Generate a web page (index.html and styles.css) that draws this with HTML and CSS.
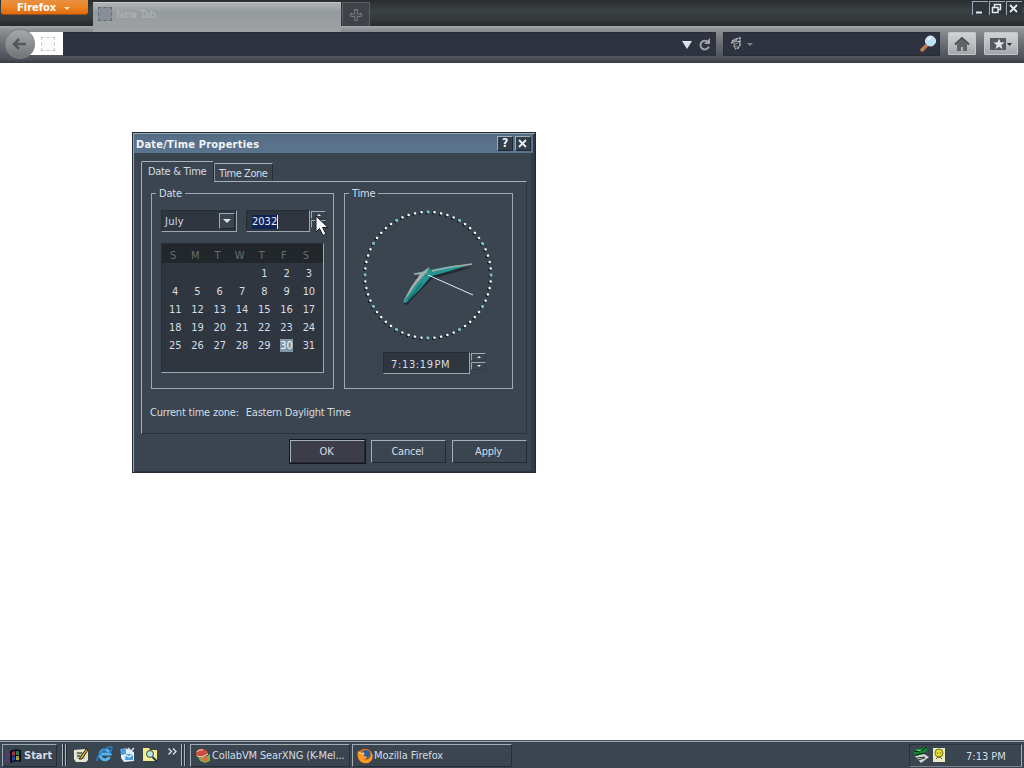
FILE: index.html
```html
<!DOCTYPE html>
<html lang="en">
<head>
<meta charset="utf-8">
<title>Desktop</title>
<link rel="stylesheet" href="styles.css">
</head>
<body>
<div class="desktop">
  <header class="tabstrip">
    <div class="fxbtn"><span>Firefox</span><i class="tri"></i></div>
    <div class="tab"><i class="ph"></i><span>New Tab</span></div>
    <div class="newtab"><svg width="14" height="14" viewBox="0 0 14 14"><path d="M5.500 1.500h3v4h4v3h-4v4h-3v-4h-4v-3h4z" fill="#4b4e58" stroke="#858992" stroke-dasharray="2 1"/></svg></div>
    <div class="winbtns">
      <b><svg width="13" height="13"><path d="M3 10.500h6" stroke="#e4eaf0" stroke-width="2"/></svg></b>
      <b><svg width="13" height="13"><path d="M4.500 5V2.500h6v5H8M2 5.500h6v5H2.500V5" fill="none" stroke="#e4eaf0" stroke-width="1.500"/></svg></b>
      <b><svg width="13" height="13"><path d="M3 3l7 7M10 3l-7 7" stroke="#e4eaf0" stroke-width="1.800"/></svg></b>
    </div>
  </header>
  <nav class="navbar">
    <div class="back"><svg width="18" height="16" viewBox="0 0 18 16"><path d="M8 3L3 8l5 5M3 8h12" fill="none" stroke="#54585b" stroke-width="2.500"/></svg></div>
    <div class="ident"><i class="ph light"></i></div>
    <div class="url">
      <svg width="32" height="16" viewBox="0 0 32 16"><path d="M1 4h10l-5 8z" fill="#e0e4ec"/><path d="M27 5.200a4.300 4.300 0 1 0 .8 4.500" fill="none" stroke="#a0a4ac" stroke-width="2"/><path d="M29 1v6h-6z" fill="#a0a4ac"/></svg>
    </div>
    <div class="search">
      <svg width="26" height="16" viewBox="0 0 26 16"><path d="M3 5l4-2 4-1v3l-2 2M2 7l5-2 4 1v3l-2 3-3 1" fill="none" stroke="#b4b8bc" stroke-width="1.500" stroke-dasharray="3 .6"/><path d="M4 9l5-2M4 11l4-1M5 6l1 6" fill="none" stroke="#8d9298"/><path d="M18 7h6l-3 3z" fill="#80848c"/></svg>
      <svg width="20" height="20" viewBox="0 0 20 20"><path d="M3 17l6-6" stroke="#b9825b" stroke-width="3.500"/><circle cx="12.500" cy="7" r="5" fill="#b5e3f7" stroke="#e3f4fc"/><path d="M10 6q1-2 3-2" stroke="#fff" fill="none" stroke-width="1.500"/></svg>
    </div>
    <div class="tool home"><svg width="18" height="16" viewBox="0 0 18 16"><path d="M2 8.500L9 2l7 6.500" fill="none" stroke="#44484b" stroke-width="2"/><path d="M4 8l5-4.500L14 8v7h-4v-4H8v4H4z" fill="#606468"/></svg></div>
    <div class="tool book"><svg width="24" height="16" viewBox="0 0 24 16"><path d="M1 2h16v12H1z" fill="#555a62"/><path d="M10 2.500l1.500 3.800 4 .2-3.100 2.500 1 4L10 10.800 6.600 13l1-4-3.100-2.500 4-.2z" fill="#dfe2e5"/><path d="M18 7h5l-2.500 3z" fill="#303439"/></svg></div>
  </nav>
  <main class="page"></main>
  <footer class="taskbar">
    <div class="start"><svg width="17" height="16" viewBox="0 0 17 16"><path d="M5 3q5-3 11-1v12q-5-2-11 1z" fill="#080b18"/><path d="M7 4l3-1v4l-3 1z" fill="#a73540"/><path d="M11 3l3 .3v4l-3-.3z" fill="#298044"/><path d="M7 9l3-1v4l-3 1z" fill="#2947ae"/><path d="M11 8l3 .3v4l-3-.3z" fill="#b2a636"/><path d="M1 4h3M0 7h5M1 10h4M0 13h5" stroke="#713a91" stroke-width="1.500" stroke-dasharray="2 1"/></svg><span>Start</span></div>
    <i class="grip"></i><i class="grip g2"></i>
    <div class="quick">
      <svg width="17" height="17" viewBox="0 0 17 17"><path d="M1 4l11-1 3 2v9l-2 2H3l-2-3z" fill="#e8e7d2"/><path d="M3 6h9v7H4z" fill="#bad0b4"/><path d="M4 7h5M4 10h3M6 13l7-10 2 1-6 9z" stroke="#28241c" fill="#e0ad32"/></svg>
      <svg width="17" height="17" viewBox="0 0 17 17"><path d="M13.500 11a5 5 0 1 1 .5-3H5" fill="none" stroke="#55b6f0" stroke-width="3"/><path d="M1 15Q1 9 8 4t8-2q0 3-3 5" fill="none" stroke="#247bcc" stroke-width="1.600"/></svg>
      <svg width="17" height="17" viewBox="0 0 17 17"><path d="M2 5l4-3 9 4v9l-10 1-3-4z" fill="#e0effa"/><path d="M1 3l6-1v6l-5 1zM7 8h7v6H6z" fill="#4c9ee0"/><path d="M7 9l3 2 4-3M9 2l3 3 3-3" fill="none" stroke="#e6f3fc" stroke-width="1.300"/></svg>
      <svg width="17" height="17" viewBox="0 0 17 17"><path d="M1 2h6l1 2h7v11H1z" fill="#f1ec83"/><path d="M3 7h10v6H3z" fill="#fff9b1"/><circle cx="8" cy="8" r="3.500" fill="#b4e6eb" stroke="#31452d"/><path d="M10.500 11l5 5" stroke="#263554" stroke-width="2"/></svg>
      <svg class="chev" width="9" height="8" viewBox="0 0 9 8"><path d="M.5.500l3 3-3 3M5 .5l3 3-3 3" fill="none" stroke="#dfe5ec" stroke-width="1.300"/></svg>
    </div>
    <i class="grip"></i><i class="grip g2"></i>
    <div class="task t1"><svg width="16" height="16" viewBox="0 0 16 16"><path d="M1 5q2-5 7-4 5 1 5 5l-5 3-7-1z" fill="#c84e45"/><path d="M2 4q2-3 6-2" stroke="#f1a58d" fill="none" stroke-width="1.500"/><path d="M3 9l6 1 6-4v7l-5 2-5-2z" fill="#7fae42"/><path d="M6 9l5-1 2 4-4 2z" fill="#e46d46"/><path d="M2 8l5 1 6-3" fill="none" stroke="#f4e3b1"/></svg><span>CollabVM SearXNG (K-Mel...</span></div>
    <div class="task t2"><svg width="16" height="16" viewBox="0 0 16 16"><circle cx="8" cy="8" r="7.300" fill="#e46b16"/><circle cx="9" cy="6.500" r="4.500" fill="#315f9b"/><path d="M1 3l3 2 3-1-1 3 4 2q-1 3-4 2 3 3 7-1 2-3 0-7 5 5 1 10-4 4-9 1-6-4-4-11z" fill="#f69b2a"/><path d="M2 4l3 2 2-1-1 2" stroke="#ffdb77" fill="none"/></svg><span>Mozilla Firefox</span></div>
    <div class="tray">
      <svg width="18" height="18" viewBox="0 0 18 18"><path d="M3 10l9-2 5 3-8 6z" fill="#d3dad5"/><path d="M5 12l8-1M6 14l7-2" stroke="#253028"/><path d="M2 4l10-2 4-1-2 5-9 4-3-2z" fill="#138a37"/><path d="M2 5l6 1 7-5M3 9l10-2" stroke="#082b16" fill="none"/><path d="M5 4l4 1" stroke="#7fe48f"/></svg>
      <svg width="14" height="16" viewBox="0 0 14 16"><path d="M1 1h12v14H1z" fill="#e9e9c4"/><circle cx="7" cy="6" r="4" fill="#e5dc29" stroke="#767217"/><path d="M4 12q3-4 6 0M5 6h1M8 6h1" stroke="#55551e" fill="none"/></svg>
      <span>7:13 PM</span>
    </div>
  </footer>

  <section class="dialog">
    <div class="title"><span>Date/Time Properties</span><b class="q">?</b><b><svg width="13" height="13"><path d="M3 3l7 7M10 3l-7 7" stroke="#e8eef4" stroke-width="1.800"/></svg></b></div>
    <div class="tabs"><div class="tb on"><span>Date &amp; Time</span></div><div class="tb off"><span>Time Zone</span></div></div>
    <div class="sheet">
      <div class="groups">
        <div class="group date">
          <div class="legend"><i></i><span>Date</span><i class="fill"></i></div>
          <div class="fields">
            <div class="combo"><span>July</span><b><i class="tri"></i></b></div>
            <div class="year"><span>2032</span></div>
            <div class="spin"><b><i class="up"></i></b><b><i class="dn"></i></b></div>
          </div>
          <div class="cal">
            <div class="row head"><span>S</span><span>M</span><span>T</span><span>W</span><span>T</span><span>F</span><span>S</span></div>
            <div class="row"><span></span><span></span><span></span><span></span><span>1</span><span>2</span><span>3</span></div>
            <div class="row"><span>4</span><span>5</span><span>6</span><span>7</span><span>8</span><span>9</span><span>10</span></div>
            <div class="row"><span>11</span><span>12</span><span>13</span><span>14</span><span>15</span><span>16</span><span>17</span></div>
            <div class="row"><span>18</span><span>19</span><span>20</span><span>21</span><span>22</span><span>23</span><span>24</span></div>
            <div class="row"><span>25</span><span>26</span><span>27</span><span>28</span><span>29</span><span><em>30</em></span><span>31</span></div>
          </div>
        </div>
        <div class="group time">
          <div class="legend"><i></i><span>Time</span><i class="fill"></i></div>
          <svg class="clock" width="136" height="136" viewBox="-68 -68 136 136">
            <circle class="shade" r="63" pathLength="60" cx="-1" cy="1"/>
            <circle class="dots" r="63" pathLength="60"/>
            <circle class="hours" r="63" pathLength="12"/>
            <path d="M-15 1L-4-4 1-8 1-3 22-8 44-10 20-3 3 2-8 13-22 28-25 27-18 13-7 1z" fill="#202b33" transform="translate(1 2)"/>
            <path d="M-14-1L0-5 22-9 44-11 22-4 0 2z" fill="#249591"/>
            <path d="M1-8L4 0-7 13-22 28-25 27-17 12-7-1z" fill="#249591"/>
            <path d="M1-8L-8-1-17 12-25 27-21 22-11 8-1-3z" fill="#a6aaa9"/>
            <path d="M-14-1L-1-3M4-4L23-8 44-11" fill="none" stroke="#a6aaa9" stroke-width="1.600"/>
            <path d="M-6 8L-20 25" stroke="#147570" stroke-width="1.500"/>
            <path d="M0 0L45 20" stroke="#e4e8ea"/>
          </svg>
          <div class="timerow"><div class="tf"><span>7:13:19 PM</span></div><div class="spin"><b><i class="up"></i></b><b><i class="dn"></i></b></div></div>
        </div>
      </div>
      <div class="zone"><span>Current time zone:</span><span>Eastern Daylight Time</span></div>
    </div>
    <div class="buttons"><div class="btn ok">OK</div><div class="btn">Cancel</div><div class="btn">Apply</div></div>
  </section>
  <svg class="cursor" width="14" height="22" viewBox="0 0 14 22"><path d="M1 1v16l3.500-3.500L8 20.500l3-1.500-3.500-6.500H13z" fill="#fff" stroke="#1a1f28"/></svg>
</div>
</body>
</html>
```
FILE: styles.css
```css
* { box-sizing: border-box; }
body { margin: 0; font: 11px/14px "DejaVu Sans Condensed", "DejaVu Sans", sans-serif; font-stretch: condensed; letter-spacing: -0.22px; color: #d4dde5; }
svg { display: block; flex: none; }
i, em { font-style: normal; }
span { white-space: nowrap; }
.desktop { position: relative; width: 1024px; height: 768px; display: flex; flex-direction: column; overflow: hidden; background: #fff; }
.tri { display: block; border: 4px solid transparent; border-top-color: #e0e4e8; border-bottom: 0; }

.tabstrip { height: 26px; display: flex; background: linear-gradient(#292d30, #3c4143 40%, #34393b 75%, #25292a); }
.fxbtn { width: 87px; height: 15px; margin-left: 1px; padding: 2px 18px 0 16px; display: flex; align-items: center; justify-content: space-between; background: linear-gradient(#e79143, #ed8425 50%, #df6a0c); border-bottom: 1px solid #9a4d14; border-radius: 0 0 3px 3px; color: #fff; font-weight: bold; letter-spacing: 0; }
.fxbtn .tri { border-width: 3px; border-bottom: 0; border-top-color: #ffe5c7; }
.tab { width: 248px; height: 30px; margin: 2px 0 0 5px; padding: 4px 5px 0; display: flex; gap: 4px; align-items: flex-start; background: linear-gradient(#b0b4b6, #969b9e 30%, #9da1a4); color: #b1b5b7; border-top: 1px solid #c5c8ca; line-height: 15px; z-index: 1; }
.ph { width: 14px; height: 14px; border: 1px dashed #656978; background: #898d96; }
.ph.light { border-color: #c6c6ca; background: #fafafa; }
.newtab { width: 28px; height: 24px; margin: 2px 0 0 1px; display: flex; align-items: center; justify-content: center; background: #3f4349; border: 1px solid #5b6065; border-bottom: 0; }
.winbtns { margin: 1px 2px 0 auto; display: flex; gap: 1px; height: 14px; }
.winbtns b { width: 16px; border-left: 1px solid #9eabb7; border-top: 1px solid #9eabb7; background: #2e363c; }

.navbar { height: 37px; display: flex; align-items: flex-start; padding: 6px 6px 0 5px; background: linear-gradient(#a4a8aa 0, #8d9195 10%, #686c72 50%, #4a4e57 90%, #363a42 100%); }
.back { width: 30px; height: 30px; margin-top: -3px; border-radius: 50%; background: linear-gradient(#a6a9aa, #868a8b 60%, #707475); border: 1px solid #7f8385; display: flex; align-items: center; justify-content: center; z-index: 1; }
.ident { width: 34px; height: 23px; margin-left: -6px; background: #fff; display: flex; align-items: center; justify-content: center; padding-left: 4px; }
.url { width: 655px; height: 24px; background: #2f333f; border-top: 1px solid #282c36; display: flex; align-items: center; justify-content: flex-end; padding-right: 3px; }
.search { width: 218px; height: 24px; margin-left: 7px; background: #2f333f; border: 1px solid #282c36; display: flex; align-items: center; justify-content: space-between; padding: 0 1px 0 5px; }
.tool { height: 23px; display: flex; align-items: center; justify-content: center; background: linear-gradient(#d0d3d5, #bcc0c3 50%, #a3a7aa); border: 1px solid #c2c6c8; border-radius: 1px; }
.home { width: 28px; margin-left: 8px; }
.book { width: 34px; margin-left: 8px; }
.page { flex: 1; background: #fff; }

.taskbar { height: 28px; display: flex; align-items: flex-start; padding: 3px 2px 0; background: #3a454f; border-top: 1px solid #4b555e; box-shadow: inset 0 1px #9ca7b1; }
.start { width: 55px; height: 23px; display: flex; align-items: center; gap: 2px; padding-left: 2px; border: 1px solid #9ca8b2; border-right-color: #252d36; border-bottom-color: #252d36; font-weight: bold; letter-spacing: 0; }
.grip { width: 2px; height: 22px; margin-left: 5px; border-left: 1px solid #aab5be; background: #252d36; }
.g2 { margin-left: 1px; }
.quick { width: 109px; display: flex; gap: 6px; padding: 2px 0 0 6px; }
.chev { margin: 2px 0 0 3px; }
.task { width: 160px; height: 23px; display: flex; align-items: center; gap: 1px; padding-left: 4px; border: 1px solid #a2adb7; border-right-color: #252d36; border-bottom-color: #252d36; letter-spacing: -0.15px; }
.t1 { margin-left: 4px; }
.t2 { margin-left: 2px; letter-spacing: -0.05px; }
.tray { width: 113px; height: 23px; margin-left: auto; display: flex; align-items: center; gap: 2px; padding-left: 2px; border: 1px solid #29313a; border-right-color: #a2adb7; border-bottom-color: #77828c; letter-spacing: 0; }
.tray svg { margin-top: -2px; }
.tray span { margin-left: 18px; padding-top: 2px; }

.dialog { position: absolute; left: 132px; top: 132px; width: 404px; height: 341px; padding: 1px 8px 0 1px; background: #3a454f; border: 1px solid #232b35; box-shadow: inset 1px 1px #96a5b3, inset -1px -1px #2c3540, inset -4px 0 #313c47; display: flex; flex-direction: column; }
.title { height: 19px; margin: 0 -6px 0 0; display: flex; align-items: center; background: linear-gradient(#566d85, #5b748e); padding: 0 2px; color: #f0f4f8; font-weight: bold; font-size: 11px; }
.title span { flex: 1; letter-spacing: 0.22px; padding-top: 2px; }
.title b { width: 16px; height: 15px; margin-left: 2px; background: #343e49; border: 1px solid #9faebb; border-right-color: #20272f; border-bottom-color: #20272f; text-align: center; line-height: 13px; font-size: 12px; }
.tabs { height: 28px; padding: 8px 0 0 7px; display: flex; align-items: flex-end; }
.tb { border: 1px solid #a3afb9; border-bottom: 0; }
.tb.on { width: 73px; height: 21px; padding: 3px 0 0 6px; border-radius: 2px 0 0; border-right-color: #252e37; background: #3a454f; margin-bottom: -1px; z-index: 1; letter-spacing: -0.32px; }
.tb.off { width: 59px; height: 18px; padding: 3px 0 0 4px; border-left-color: #84909a; border-right-color: #252e37; letter-spacing: -0.45px; }
.sheet { height: 253px; margin-left: 7px; padding: 11px 12px 0 9px; border: 1px solid #a3afb9; border-right-color: #2b343e; border-bottom-color: #2b343e; }
.groups { display: flex; gap: 10px; }
.group { height: 196px; border: 1px solid #9ca8b2; border-top: 0; }
.date { width: 183px; }
.time { width: 169px; }
.legend { height: 14px; margin-top: -7px; display: flex; align-items: center; gap: 3px; }
.legend i { width: 4px; height: 1px; background: #9ca8b2; }
.legend .fill { flex: 1; }
.legend span { padding-top: 1px; }
.fields { display: flex; padding: 10px 0 0 9px; }
.combo { width: 76px; height: 22px; padding: 1px 1px 1px 3px; display: flex; align-items: center; justify-content: space-between; background: #303640; border: 1px solid #262d36; border-right-color: #9ca8b2; border-bottom-color: #9ca8b2; letter-spacing: 0.25px; }
.combo span { padding-top: 2px; }
.combo b { width: 16px; height: 16px; border: 1px solid #9ca8b2; border-right-color: #20272f; border-bottom-color: #20272f; display: flex; align-items: center; justify-content: center; background: #3a454f; }
.year { width: 64px; height: 22px; margin-left: 9px; padding: 4px 0 0 5px; background: #303640; border: 1px solid #262d36; border-right-color: #9ca8b2; border-bottom-color: #9ca8b2; }
.year span { display: inline-block; height: 14px; background: #102456; border-right: 1px solid #e8eef4; color: #e8eef4; letter-spacing: 0; }
.spin { width: 15px; height: 18px; margin: 1px 0 0 1px; display: flex; flex-direction: column; gap: 1px; }
.spin b { height: 8px; border: 1px solid #9ca8b2; border-right-color: #313b45; border-bottom-color: #313b45; display: flex; align-items: center; justify-content: center; }
.spin i { border: 2px solid transparent; }
.spin .up { border-bottom-color: #e5eaf0; border-top: 0; }
.spin .dn { border-top-color: #e5eaf0; border-bottom: 0; }
.cal { width: 163px; height: 130px; margin: 11px 0 0 9px; padding: 0 3px 0 2px; background: #303640; border: 1px solid #262d36; border-right-color: #9ca8b2; border-bottom-color: #9ca8b2; }
.row { height: 18px; display: grid; grid-template-columns: repeat(7, 1fr); text-align: center; line-height: 21px; letter-spacing: -0.1px; }
.head { background: #22272c; color: #666d70; margin: 0 -3px 0 -2px; padding: 2px 6px 0 0; height: 19px; }
.head span { line-height: 19px; }
.row em { display: inline-block; height: 13px; line-height: 13px; background: #8297a5; color: #f5f7fa; }
.clock { margin: 7px 0 0 15px; }
.clock circle { fill: none; stroke-linecap: round; }
.shade { stroke: #11191e; stroke-width: 2.8; stroke-dasharray: .01 .99; }
.dots { stroke: #f4f8f8; stroke-width: 2.5; stroke-dasharray: .01 .99; }
.hours { stroke: #76bcbd; stroke-width: 2.8; stroke-dasharray: .01 .99; }
.timerow { display: flex; padding: 9px 0 0 38px; }
.tf { width: 87px; height: 22px; padding: 5px 0 0 7px; background: #303640; border: 1px solid #262d36; border-right-color: #9ca8b2; border-bottom-color: #9ca8b2; letter-spacing: 0.65px; word-spacing: -3px; }
.zone { margin-top: 17px; margin-left: -1px; display: flex; gap: 7px; }
.buttons { display: flex; justify-content: flex-end; gap: 6px; padding-top: 6px; }
.btn { width: 75px; height: 23px; text-align: center; line-height: 21px; border: 1px solid #a3afb9; border-right-color: #222a33; border-bottom-color: #222a33; padding-right: 2px; }
.ok { background: #3d3d49; box-shadow: 0 0 0 1px #12151e; }
.cursor { position: absolute; left: 315px; top: 215px; }
```
